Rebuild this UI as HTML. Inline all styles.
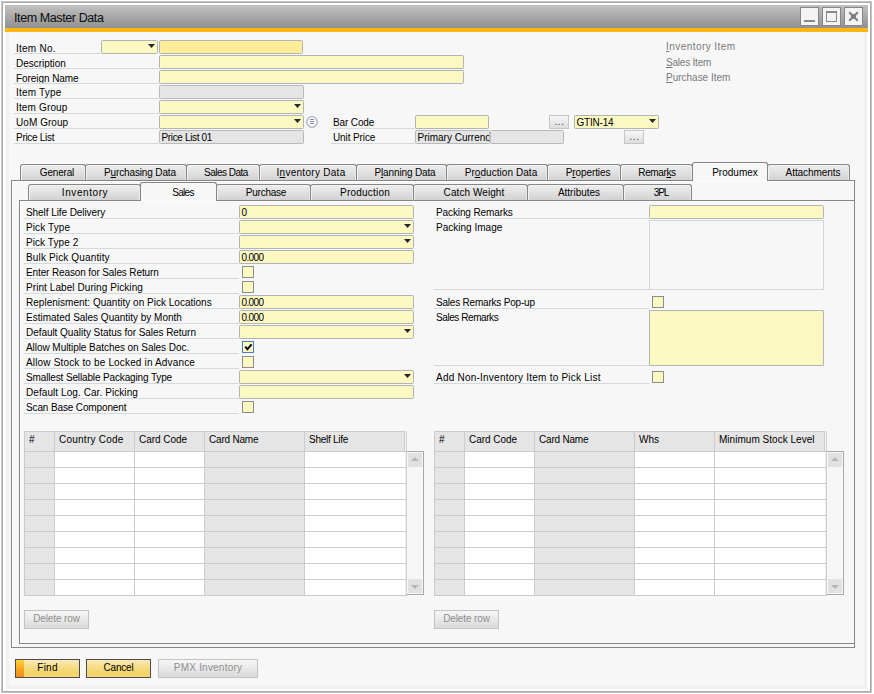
<!DOCTYPE html><html><head><meta charset="utf-8"><title>Item Master Data</title><style>
*{box-sizing:border-box;margin:0;padding:0}
html,body{width:874px;height:694px;overflow:hidden;background:#fff}
body{position:relative;font-family:"Liberation Sans",sans-serif;font-size:10px;color:#000;line-height:12px}
div,span{position:absolute;white-space:nowrap}
u{text-decoration:underline}
.lb{height:14px;border-bottom:1px solid #d3d9e1;padding:2px 0 0 2px;line-height:12px;overflow:hidden}
.f{height:14px;border:1px solid #b0b3b8;border-radius:1.5px;background:#fbf8c2;padding:1px 0 0 1.5px;line-height:11px;overflow:hidden}
.g{background:#e5e5e5;border-color:#b9b9b9}
.tri{width:7px;height:4px;background:#26262e;clip-path:polygon(0 0,100% 0,50% 100%)}
.tru{width:8px;height:4px;background:#b6b6b6;clip-path:polygon(50% 0,100% 100%,0 100%)}
.trd{width:8px;height:4px;background:#b6b6b6;clip-path:polygon(0 0,100% 0,50% 100%)}
.cb{width:12px;height:12px;border:1px solid #8c8c8c;background:#fbf8c2}
.tab{border:1px solid #868686;border-bottom:none;border-radius:3px 3px 0 0;background:linear-gradient(#eeeeee,#e2e2e2 45%,#d2d2d2);text-align:center;line-height:12px;box-shadow:inset 1px 1px 0 #f3f3f3,inset -1px 0 0 #e9e9e9}

.tt{width:200px;text-align:center;line-height:12px}
.tab.on{background:#f7f7f7;box-shadow:none}
.btn{height:19px;border:1px solid #c3c3c3;background:linear-gradient(#f6f6f6,#e9e9e9 50%,#d9d9d9);color:#8e8e8e;text-align:center;line-height:12px;padding-top:2px}
.yb{height:19px;border:1px solid #4b4b58;background:linear-gradient(#f9ebb5,#f6dc85 45%,#f3d466 75%,#f4d870);text-align:center;line-height:12px;padding-top:2px}
.dots{height:14px;width:20px;border:1px solid #c6c6c6;background:linear-gradient(#f7f7f7,#dddddd);text-align:center;line-height:11px;color:#444;font-size:10px;letter-spacing:0.6px;padding-left:1px}
.gh{background:#e5e5e5;border-left:1px solid #cbcbcb;border-top:1px solid #cbcbcb;height:20px;padding:2px 0 0 4px;line-height:12px}
.sb{width:17px;background:#f7f7f7;border:1px solid #a8a8a8;border-left:none}
.sbb{width:14px;height:14px;background:#e1e1e1;left:1px}
</style></head><body>
<div style="left:1px;top:1px;width:871px;height:692px;border:1px solid #c4c4c4"></div>
<div style="left:2px;top:2px;width:869px;height:690px;border:1px solid #ababab"></div>
<div style="left:6px;top:32px;width:861px;height:657px;background:#f1f1f1"></div>
<div style="left:9px;top:32px;width:855px;height:653px;background:#f7f7f7"></div>
<div style="left:5px;top:5px;width:863px;height:23px;background:linear-gradient(#c2c2c2,#a9a9a9 50%,#909090)"></div>
<div style="left:5px;top:28px;width:863px;height:4px;background:#fdb714"></div>
<div style="left:14px;top:10px;font-size:12.5px;letter-spacing:-0.4px;line-height:16px;color:#0c0c0c">Item Master Data</div>
<div style="left:800px;top:7px;width:19px;height:19px;border:1px solid #858585;background:#f3f3f3">
<div style="left:3px;top:12px;width:11px;height:2px;background:#8a8a8a"></div>
</div>
<div style="left:822px;top:7px;width:19px;height:19px;border:1px solid #858585;background:#f3f3f3">
<div style="left:3px;top:3px;width:11px;height:11px;border:1px solid #8a8a8a;border-top-width:2px"></div>
</div>
<div style="left:844px;top:7px;width:19px;height:19px;border:1px solid #858585;background:#f3f3f3">
<svg style="position:absolute;left:3px;top:3px" width="11" height="11" viewBox="0 0 11 11"><path d="M1.2 1.2 L9.8 9.8 M9.8 1.2 L1.2 9.8" stroke="#808080" stroke-width="2.1" fill="none"/><rect x="3" y="3" width="5" height="5" fill="#808080"/></svg>
</div>
<div class="lb" style="left:14px;top:40px;width:87px;height:14px;padding-top:3px;letter-spacing:0.241px">Item No.</div>
<div class="lb" style="left:14px;top:55px;width:145px;height:14px;padding-top:3px;letter-spacing:-0.016px">Description</div>
<div class="lb" style="left:14px;top:70px;width:145px;height:14px;padding-top:3px;letter-spacing:-0.063px">Foreign Name</div>
<div class="lb" style="left:14px;top:85px;width:145px;height:14px;padding-top:2px;letter-spacing:0.207px">Item Type</div>
<div class="lb" style="left:14px;top:100px;width:145px;height:14px;padding-top:2px;letter-spacing:0.149px">Item Group</div>
<div class="lb" style="left:14px;top:115px;width:145px;height:14px;padding-top:2px;letter-spacing:0.060px">UoM Group</div>
<div class="lb" style="left:14px;top:130px;width:145px;height:14px;padding-top:2px;letter-spacing:-0.294px">Price List</div>
<div class="f " style="left:101px;top:40px;width:57px"><div class="tri" style="left:46px;top:3px"></div></div>
<div class="f " style="left:159px;top:40px;width:144px;height:14px;background:#ffed9a"></div>
<div class="f " style="left:159px;top:55px;width:305px;height:14px;"></div>
<div class="f " style="left:159px;top:70px;width:305px;height:14px;"></div>
<div class="f g" style="left:159px;top:85px;width:145px;height:14px;"></div>
<div class="f " style="left:159px;top:100px;width:145px"><div class="tri" style="left:134px;top:3px"></div></div>
<div class="f " style="left:159px;top:115px;width:145px"><div class="tri" style="left:134px;top:3px"></div></div>
<div class="f g" style="left:159px;top:130px;width:145px;height:14px;letter-spacing:-0.355px">Price List 01</div>
<svg style="position:absolute;left:306px;top:116px" width="12" height="12" viewBox="0 0 12 12"><defs><radialGradient id="cg" cx="50%" cy="45%" r="55%"><stop offset="0" stop-color="#ffffff"/><stop offset="0.7" stop-color="#f3f5fb"/><stop offset="1" stop-color="#d5dbea"/></radialGradient></defs><circle cx="6" cy="6" r="5.3" fill="url(#cg)" stroke="#a9b2c8" stroke-width="1.2"/><path d="M4 3.5h4M4 5.5h4M4 7.5h4" stroke="#858c98" stroke-width="1"/></svg>
<div class="lb" style="left:331px;top:115px;width:84px;height:14px;padding-top:2px;letter-spacing:-0.126px">Bar Code</div>
<div class="lb" style="left:331px;top:130px;width:84px;height:14px;padding-top:2px;letter-spacing:-0.109px">Unit Price</div>
<div class="f " style="left:415px;top:115px;width:74px;height:14px;"></div>
<div class="dots" style="left:549px;top:115px">...</div>
<div class="f " style="left:574px;top:115px;width:85px;letter-spacing:-0.213px">GTIN-14<div class="tri" style="left:74px;top:3px"></div></div>
<div class="f g" style="left:415px;top:130px;width:75px;height:14px;">Primary Currenc</div>
<div class="f g" style="left:490px;top:130px;width:74px;height:14px;"></div>
<div class="dots" style="left:624px;top:130px">...</div>
<div style="left:666px;top:41px;color:#7a7a7a;letter-spacing:0.444px"><u>I</u>nventory Item</div>
<div style="left:666px;top:57px;color:#7a7a7a;letter-spacing:-0.212px"><u>S</u>ales Item</div>
<div style="left:666px;top:72px;color:#7a7a7a;letter-spacing:-0.012px"><u>P</u>urchase Item</div>
<div style="left:11px;top:180px;width:844px;height:468px;border:1px solid #868686;background:#f7f7f7;box-shadow:inset 1px 1px 0 #fdfdfd"></div>
<div class="tab" style="left:20px;top:164px;width:66px;height:16px"><div class="tt" style="left:-64px;top:2px;letter-spacing:-0.176px">General</div></div>
<div class="tab" style="left:85px;top:164px;width:102px;height:16px"><div class="tt" style="left:-46px;top:2px;letter-spacing:-0.141px">P<u>u</u>rchasing Data</div></div>
<div class="tab" style="left:186px;top:164px;width:74px;height:16px"><div class="tt" style="left:-61px;top:2px;letter-spacing:-0.506px">Sales Data</div></div>
<div class="tab" style="left:259px;top:164px;width:98px;height:16px"><div class="tt" style="left:-49px;top:2px;letter-spacing:0.287px">I<u>n</u>ventory Data</div></div>
<div class="tab" style="left:356px;top:164px;width:91px;height:16px"><div class="tt" style="left:-52px;top:2px;letter-spacing:-0.138px">P<u>l</u>anning Data</div></div>
<div class="tab" style="left:446px;top:164px;width:102px;height:16px"><div class="tt" style="left:-46px;top:2px;letter-spacing:0.061px">Pr<u>o</u>duction Data</div></div>
<div class="tab" style="left:547px;top:164px;width:74px;height:16px"><div class="tt" style="left:-60px;top:2px;letter-spacing:-0.086px">P<u>r</u>operties</div></div>
<div class="tab" style="left:620px;top:164px;width:73px;height:16px"><div class="tt" style="left:-64px;top:2px;letter-spacing:-0.384px">Remar<u>k</u>s</div></div>
<div class="tab on" style="left:692px;top:162px;width:76px;height:19px;z-index:3"><div class="tt" style="left:-58px;top:4px;letter-spacing:0.018px">Produmex</div></div>
<div class="tab" style="left:767px;top:164px;width:83px;height:16px"><div class="tt" style="left:-55px;top:2px;letter-spacing:-0.068px">Attachments</div></div>
<div style="left:19px;top:200px;width:836px;height:444px;border:1px solid #868686;background:#f7f7f7;box-shadow:inset 1px 1px 0 #fdfdfd"></div>
<div class="tab" style="left:28px;top:184px;width:113px;height:16px"><div class="tt" style="left:-44px;top:2px;letter-spacing:0.583px">Inventory</div></div>
<div class="tab on" style="left:140px;top:182px;width:77px;height:19px;z-index:3"><div class="tt" style="left:-58px;top:4px;letter-spacing:-0.679px">Sales</div></div>
<div class="tab" style="left:216px;top:184px;width:95px;height:16px"><div class="tt" style="left:-51px;top:2px;letter-spacing:-0.241px">Purchase</div></div>
<div class="tab" style="left:310px;top:184px;width:104px;height:16px"><div class="tt" style="left:-46px;top:2px;letter-spacing:0.206px">Production</div></div>
<div class="tab" style="left:413px;top:184px;width:115px;height:16px"><div class="tt" style="left:-40px;top:2px;letter-spacing:0.076px">Catch Weight</div></div>
<div class="tab" style="left:527px;top:184px;width:97px;height:16px"><div class="tt" style="left:-49px;top:2px;letter-spacing:-0.005px">Attributes</div></div>
<div class="tab" style="left:623px;top:184px;width:69px;height:16px"><div class="tt" style="left:-63px;top:2px;letter-spacing:-1.066px">3PL</div></div>
<div class="lb" style="left:24px;top:205px;width:215px;height:14px;padding-top:2px;letter-spacing:-0.072px">Shelf Life Delivery</div>
<div class="f " style="left:239px;top:205px;width:175px;height:14px;">0</div>
<div class="lb" style="left:24px;top:220px;width:215px;height:14px;padding-top:2px;letter-spacing:0.101px">Pick Type</div>
<div class="f " style="left:239px;top:220px;width:175px"><div class="tri" style="left:164px;top:3px"></div></div>
<div class="lb" style="left:24px;top:235px;width:215px;height:14px;padding-top:2px;letter-spacing:0.077px">Pick Type 2</div>
<div class="f " style="left:239px;top:235px;width:175px"><div class="tri" style="left:164px;top:3px"></div></div>
<div class="lb" style="left:24px;top:250px;width:215px;height:14px;padding-top:2px;letter-spacing:0.145px">Bulk Pick Quantity</div>
<div class="f " style="left:239px;top:250px;width:175px;height:14px;letter-spacing:-0.616px">0.000</div>
<div class="lb" style="left:24px;top:265px;width:215px;height:14px;padding-top:2px;letter-spacing:-0.122px">Enter Reason for Sales Return</div>
<div class="cb" style="left:242px;top:266px"></div>
<div class="lb" style="left:24px;top:280px;width:215px;height:14px;padding-top:2px;letter-spacing:0.072px">Print Label During Picking</div>
<div class="cb" style="left:242px;top:281px"></div>
<div class="lb" style="left:24px;top:295px;width:215px;height:14px;padding-top:2px;letter-spacing:0.015px">Replenisment: Quantity on Pick Locations</div>
<div class="f " style="left:239px;top:295px;width:175px;height:14px;letter-spacing:-0.616px">0.000</div>
<div class="lb" style="left:24px;top:310px;width:215px;height:14px;padding-top:2px;letter-spacing:-0.010px">Estimated Sales Quantity by Month</div>
<div class="f " style="left:239px;top:310px;width:175px;height:14px;letter-spacing:-0.616px">0.000</div>
<div class="lb" style="left:24px;top:325px;width:215px;height:14px;padding-top:2px;letter-spacing:-0.047px">Default Quality Status for Sales Return</div>
<div class="f " style="left:239px;top:325px;width:175px"><div class="tri" style="left:164px;top:3px"></div></div>
<div class="lb" style="left:24px;top:340px;width:215px;height:14px;padding-top:2px;letter-spacing:-0.054px">Allow Multiple Batches on Sales Doc.</div>
<div class="cb" style="left:242px;top:341px;border-color:#4a7dbd"><svg style="position:absolute;left:0;top:0" width="10" height="10" viewBox="0 0 10 10"><path d="M2.3 4.6 L4.4 7.2 L8.6 2.4" stroke="#000" stroke-width="1.9" fill="none"/></svg></div>
<div class="lb" style="left:24px;top:355px;width:215px;height:14px;padding-top:2px;letter-spacing:0.161px">Allow Stock to be Locked in Advance</div>
<div class="cb" style="left:242px;top:356px"></div>
<div class="lb" style="left:24px;top:370px;width:215px;height:14px;padding-top:2px;letter-spacing:-0.138px">Smallest Sellable Packaging Type</div>
<div class="f " style="left:239px;top:370px;width:175px"><div class="tri" style="left:164px;top:3px"></div></div>
<div class="lb" style="left:24px;top:385px;width:215px;height:14px;padding-top:2px;letter-spacing:0.075px">Default Log. Car. Picking</div>
<div class="f " style="left:239px;top:385px;width:175px;height:14px;"></div>
<div class="lb" style="left:24px;top:400px;width:215px;height:14px;padding-top:2px;letter-spacing:-0.131px">Scan Base Component</div>
<div class="cb" style="left:242px;top:401px"></div>
<div class="lb" style="left:434px;top:205px;width:215px;height:14px;padding-top:2px;letter-spacing:-0.111px">Packing Remarks</div>
<div class="f " style="left:649px;top:205px;width:175px;height:14px;"></div>
<div class="lb" style="left:434px;top:220px;width:215px;height:70px;padding-top:2px;letter-spacing:0.010px">Packing Image</div>
<div style="left:649px;top:220px;width:175px;height:70px;border:1px solid #d2d6de"></div>
<div class="lb" style="left:434px;top:295px;width:215px;height:14px;padding-top:2px;letter-spacing:-0.203px">Sales Remarks Pop-up</div>
<div class="cb" style="left:652px;top:296px"></div>
<div class="lb" style="left:434px;top:310px;width:215px;height:56px;padding-top:2px;letter-spacing:-0.425px">Sales Remarks</div>
<div class="f " style="left:649px;top:310px;width:175px;height:56px;border-radius:1px"></div>
<div class="lb" style="left:434px;top:370px;width:215px;height:14px;padding-top:2px;letter-spacing:0.228px">Add Non-Inventory Item to Pick List</div>
<div class="cb" style="left:652px;top:371px"></div>
<div class="gh" style="left:24px;top:431px;width:30px">#</div>
<div class="gh" style="left:54px;top:431px;width:80px;letter-spacing:0.242px">Country Code</div>
<div class="gh" style="left:134px;top:431px;width:70px;letter-spacing:-0.025px">Card Code</div>
<div class="gh" style="left:204px;top:431px;width:100px;letter-spacing:-0.196px">Card Name</div>
<div class="gh" style="left:304px;top:431px;width:100px;letter-spacing:-0.259px">Shelf Life</div>
<div style="left:404px;top:431px;width:1px;height:20px;background:#cbcbcb"></div>
<div style="left:24px;top:451px;width:381px;height:145px;background:#fff"></div>
<div style="left:405px;top:451px;width:1px;height:145px;background:#ececec"></div>
<div style="left:24px;top:451px;width:30px;height:145px;background:#e5e5e5"></div>
<div style="left:204px;top:451px;width:100px;height:145px;background:#e5e5e5"></div>
<div style="left:24px;top:451px;width:1px;height:145px;background:#cbcbcb"></div>
<div style="left:54px;top:451px;width:1px;height:145px;background:#cbcbcb"></div>
<div style="left:134px;top:451px;width:1px;height:145px;background:#cbcbcb"></div>
<div style="left:204px;top:451px;width:1px;height:145px;background:#cbcbcb"></div>
<div style="left:304px;top:451px;width:1px;height:145px;background:#cbcbcb"></div>
<div style="left:406px;top:431px;width:1px;height:165px;background:#d2d2d2"></div>
<div style="left:24px;top:451px;width:383px;height:1px;background:#cbcbcb"></div>
<div style="left:24px;top:467px;width:383px;height:1px;background:#cbcbcb"></div>
<div style="left:24px;top:483px;width:383px;height:1px;background:#cbcbcb"></div>
<div style="left:24px;top:499px;width:383px;height:1px;background:#cbcbcb"></div>
<div style="left:24px;top:515px;width:383px;height:1px;background:#cbcbcb"></div>
<div style="left:24px;top:531px;width:383px;height:1px;background:#cbcbcb"></div>
<div style="left:24px;top:547px;width:383px;height:1px;background:#cbcbcb"></div>
<div style="left:24px;top:563px;width:383px;height:1px;background:#cbcbcb"></div>
<div style="left:24px;top:579px;width:383px;height:1px;background:#cbcbcb"></div>
<div style="left:24px;top:595px;width:383px;height:1px;background:#cbcbcb"></div>
<div class="sb" style="left:407px;top:451px;height:144px"><div class="sbb" style="top:1px"><div class="tru" style="left:3px;top:4px"></div></div><div class="sbb" style="top:127px"><div class="trd" style="left:3px;top:6px"></div></div></div>
<div class="gh" style="left:434px;top:431px;width:30px">#</div>
<div class="gh" style="left:464px;top:431px;width:70px;letter-spacing:-0.025px">Card Code</div>
<div class="gh" style="left:534px;top:431px;width:100px;letter-spacing:-0.196px">Card Name</div>
<div class="gh" style="left:634px;top:431px;width:80px;letter-spacing:0.000px">Whs</div>
<div class="gh" style="left:714px;top:431px;width:110px;letter-spacing:0.027px">Minimum Stock Level</div>
<div style="left:824px;top:431px;width:1px;height:20px;background:#cbcbcb"></div>
<div style="left:434px;top:451px;width:391px;height:145px;background:#fff"></div>
<div style="left:825px;top:451px;width:1px;height:145px;background:#ececec"></div>
<div style="left:434px;top:451px;width:30px;height:145px;background:#e5e5e5"></div>
<div style="left:534px;top:451px;width:100px;height:145px;background:#e5e5e5"></div>
<div style="left:434px;top:451px;width:1px;height:145px;background:#cbcbcb"></div>
<div style="left:464px;top:451px;width:1px;height:145px;background:#cbcbcb"></div>
<div style="left:534px;top:451px;width:1px;height:145px;background:#cbcbcb"></div>
<div style="left:634px;top:451px;width:1px;height:145px;background:#cbcbcb"></div>
<div style="left:714px;top:451px;width:1px;height:145px;background:#cbcbcb"></div>
<div style="left:826px;top:431px;width:1px;height:165px;background:#d2d2d2"></div>
<div style="left:434px;top:451px;width:393px;height:1px;background:#cbcbcb"></div>
<div style="left:434px;top:467px;width:393px;height:1px;background:#cbcbcb"></div>
<div style="left:434px;top:483px;width:393px;height:1px;background:#cbcbcb"></div>
<div style="left:434px;top:499px;width:393px;height:1px;background:#cbcbcb"></div>
<div style="left:434px;top:515px;width:393px;height:1px;background:#cbcbcb"></div>
<div style="left:434px;top:531px;width:393px;height:1px;background:#cbcbcb"></div>
<div style="left:434px;top:547px;width:393px;height:1px;background:#cbcbcb"></div>
<div style="left:434px;top:563px;width:393px;height:1px;background:#cbcbcb"></div>
<div style="left:434px;top:579px;width:393px;height:1px;background:#cbcbcb"></div>
<div style="left:434px;top:595px;width:393px;height:1px;background:#cbcbcb"></div>
<div class="sb" style="left:827px;top:451px;height:144px"><div class="sbb" style="top:1px"><div class="tru" style="left:3px;top:4px"></div></div><div class="sbb" style="top:127px"><div class="trd" style="left:3px;top:6px"></div></div></div>
<div class="btn" style="left:24px;top:610px;width:65px;letter-spacing:-0.108px">Delete row</div>
<div class="btn" style="left:434px;top:610px;width:65px;letter-spacing:-0.108px">Delete row</div>
<div class="yb" style="left:15px;top:659px;width:65px"><div style="left:0;top:0;width:8px;height:17px;background:linear-gradient(#ffd23c,#f6a21a 60%,#ee8f12)"></div><span style="position:static;letter-spacing:0.236px">Find</span></div>
<div class="yb" style="left:86px;top:659px;width:65px;letter-spacing:-0.221px">Cancel</div>
<div class="btn" style="left:158px;top:659px;width:100px;letter-spacing:0.210px">PMX Inventory</div>
</body></html>
